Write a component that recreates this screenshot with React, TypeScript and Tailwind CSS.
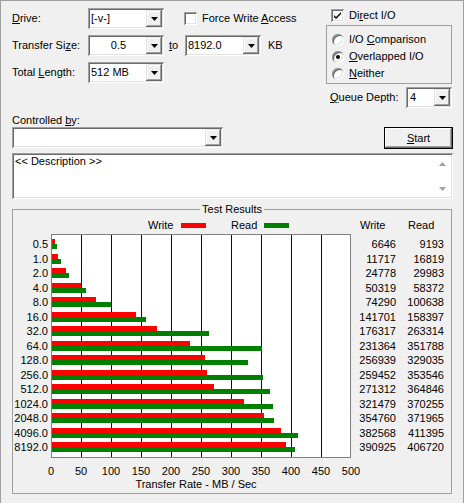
import React from "react";

// classic win32 bevels
const sunken =
  "shadow-[inset_1px_1px_0_#a0a0a0,inset_-1px_-1px_0_#ffffff,inset_2px_2px_0_#696969,inset_-2px_-2px_0_#e3e3e3]";
const raised =
  "shadow-[inset_-1px_-1px_0_#696969,inset_1px_1px_0_#e3e3e3,inset_-2px_-2px_0_#a0a0a0,inset_2px_2px_0_#ffffff]";

const sizes = ["0.5", "1.0", "2.0", "4.0", "8.0", "16.0", "32.0", "64.0", "128.0", "256.0", "512.0", "1024.0", "2048.0", "4096.0", "8192.0"];
const writes = [6646, 11717, 24778, 50319, 74290, 141701, 176317, 231364, 256939, 259452, 271312, 321479, 354760, 382568, 390925];
const reads = [9193, 16819, 29983, 58372, 100638, 158397, 263314, 351788, 329035, 353546, 364846, 370255, 371965, 411395, 406720];
const ticks = [0, 50, 100, 150, 200, 250, 300, 350, 400, 450, 500];

const Arrow = ({ up = false, color = "#000000" }: { up?: boolean; color?: string }) => (
  <svg width="7" height="4" viewBox="0 0 7 4">
    <path d={up ? "M0 4h7L3.5 0z" : "M0 0h7L3.5 4z"} fill={color} />
  </svg>
);

interface ComboProps {
  value?: string;
  className?: string;
  center?: boolean;
}

const Combo = ({ value = "", className = "", center = false }: ComboProps) => (
  <div className={`flex h-[21px] bg-white p-[2px] ${sunken} ${className}`}>
    <div className={`flex-1 pl-[1px] leading-[17px] ${center ? "text-center" : ""}`}>{value}</div>
    <div className={`w-[16px] flex items-center justify-center bg-[#f0f0f0] ${raised}`}>
      <Arrow />
    </div>
  </div>
);

const Check = ({ checked = false }: { checked?: boolean }) => (
  <div className={`w-[13px] h-[13px] bg-white flex items-center justify-center ${sunken}`}>
    {checked && (
      <svg width="7" height="7" viewBox="0 0 7 7">
        <path d="M0 3l2 2 5-5v2L2 7 0 5z" fill="#000000" />
      </svg>
    )}
  </div>
);

const Radio = ({ on = false }: { on?: boolean }) => (
  <div className="w-[12px] h-[12px] rounded-full bg-white flex items-center justify-center shadow-[inset_1px_1px_0_#a0a0a0,inset_-1px_-1px_0_#ffffff,inset_2px_2px_0_#696969,inset_-2px_-2px_0_#e3e3e3]">
    {on && <div className="w-[4px] h-[4px] rounded-full bg-black" />}
  </div>
);

const App = () => {
  return (
    <div className="w-[464px] h-[503px] bg-[#f0f0f0] border border-b-0 border-[#a0a0a0] text-black text-[11px] leading-[13px] font-['Liberation_Sans',Arial,sans-serif] select-none">
      {/* top controls */}
      <div className="flex pt-[7px] pl-[11px]">
        <div className="w-[314px] flex flex-col gap-[6px]">
          <div className="flex items-center h-[21px]">
            <span className="w-[76px]">
              <u>D</u>rive:
            </span>
            <Combo value="[-v-]" className="w-[76px]" />
            <div className="ml-[20px]">
              <Check />
            </div>
            <span className="ml-[5px]">
              Force Write <u>A</u>ccess
            </span>
          </div>
          <div className="flex items-center h-[21px]">
            <span className="w-[76px]">
              Transfer Si<u>z</u>e:
            </span>
            <Combo value="0.5" center className="w-[76px]" />
            <span className="w-[16px] ml-[5px]">
              <u>t</u>o
            </span>
            <Combo value="8192.0" className="w-[76px]" />
            <span className="ml-[7px]">KB</span>
          </div>
          <div className="flex items-center h-[21px]">
            <span className="w-[76px]">
              Total <u>L</u>ength:
            </span>
            <Combo value="512 MB" className="w-[76px]" />
          </div>
        </div>

        <div className="w-[126px] flex flex-col">
          <div className="flex items-center h-[15px] pl-[5px]">
            <Check checked />
            <span className="ml-[5px]">
              Di<u>r</u>ect I/O
            </span>
          </div>
          <div className="mt-[2px] h-[59px] border border-[#a0a0a0] pt-[5px] pl-[5px]">
            <div className="flex items-center h-[17px]">
              <Radio />
              <span className="ml-[5px]">
                I/O <u>C</u>omparison
              </span>
            </div>
            <div className="flex items-center h-[17px]">
              <Radio on />
              <span className="ml-[5px]">
                <u>O</u>verlapped I/O
              </span>
            </div>
            <div className="flex items-center h-[17px]">
              <Radio />
              <span className="ml-[5px]">
                <u>N</u>either
              </span>
            </div>
          </div>
          <div className="mt-[3px] flex items-center h-[21px] pl-[4px]">
            <span className="w-[76px]">
              <u>Q</u>ueue Depth:
            </span>
            <Combo value="4" className="w-[46px] pl-[3px]" />
          </div>
        </div>
      </div>

      {/* controlled by + start */}
      <div className="pl-[11px] pr-[10px]">
        <div className="mt-[6px] h-[13px]">
          Controlled <u>b</u>y:
        </div>
        <div className="flex items-start h-[22px]">
          <Combo className="w-[211px]" />
          <button className="ml-auto w-[69px] h-[22px] bg-[#f0f0f0] border border-black shadow-[inset_-1px_-1px_0_#696969,inset_1px_1px_0_#ffffff,inset_-2px_-2px_0_#a0a0a0] leading-[20px] text-center">
            <u>S</u>tart
          </button>
        </div>

        {/* description */}
        <div className={`mt-[4px] w-[441px] h-[46px] bg-white p-[2px] flex ${sunken}`}>
          <div className="flex-1 pl-[1px]">&lt;&lt; Description &gt;&gt;</div>
          <div className="w-[17px] flex flex-col justify-between">
            <div className="h-[17px] flex items-center justify-center">
              <Arrow up color="#a0a0a0" />
            </div>
            <div className="h-[17px] flex items-center justify-center">
              <Arrow color="#a0a0a0" />
            </div>
          </div>
        </div>

        {/* test results */}
        <div className="mt-[10px] w-[440px] h-[285px] border border-[#a0a0a0]">
          <div className="-mt-[7px] flex justify-center">
            <span className="bg-[#f0f0f0] px-[2px] leading-[13px]">Test Results</span>
          </div>

          <div className="mt-[3px] h-[13px] flex items-center pl-[135px]">
            <span className="w-[33px]">Write</span>
            <div className="w-[25px] h-[5px] bg-[#ff0000]" />
            <div className="w-[25px]" />
            <span className="w-[33px]">Read</span>
            <div className="w-[25px] h-[5px] bg-[#008000]" />
            <div className="w-[71px]" />
            <span className="w-[48px]">Write</span>
            <span>Read</span>
          </div>

          <div className="mt-[2px] flex">
            <div className="w-[38px] pr-[3px] pt-[5px] text-right">
              {sizes.map((s) => (
                <div key={s} className="h-[14.533px] leading-[11px]">
                  {s}
                </div>
              ))}
            </div>

            <div className="relative w-[300px] h-[224px] border border-[#808080] bg-white pt-[4px]">
              {ticks.slice(1, 10).map((t, k) => (
                <div
                  key={t}
                  className="absolute top-0 bottom-0 w-px bg-[#000080]"
                  style={{ left: 29 + 30 * k }}
                />
              ))}
              {sizes.map((s, i) => (
                <div key={s} className="relative h-[14.533px]">
                  <div className="h-[5px] bg-[#ff0000]" style={{ width: writes[i] * 0.0006 - 1 }} />
                  <div className="h-[5px] bg-[#008000]" style={{ width: reads[i] * 0.0006 - 1 }} />
                </div>
              ))}
            </div>

            <div className="pt-[5px] flex">
              <div className="w-[45px] text-right">
                {writes.map((v, i) => (
                  <div key={i} className="h-[14.533px] leading-[11px]">
                    {v}
                  </div>
                ))}
              </div>
              <div className="w-[48px] text-right">
                {reads.map((v, i) => (
                  <div key={i} className="h-[14.533px] leading-[11px]">
                    {v}
                  </div>
                ))}
              </div>
            </div>
          </div>

          <div className="mt-[7px] flex pl-[23px] h-[13px]">
            {ticks.map((t) => (
              <span key={t} className="w-[30px] text-center">
                {t}
              </span>
            ))}
          </div>
          <div className="ml-[23px] w-[320px] text-center h-[13px]">Transfer Rate - MB / Sec</div>
        </div>
      </div>
    </div>
  );
};

export default App;
